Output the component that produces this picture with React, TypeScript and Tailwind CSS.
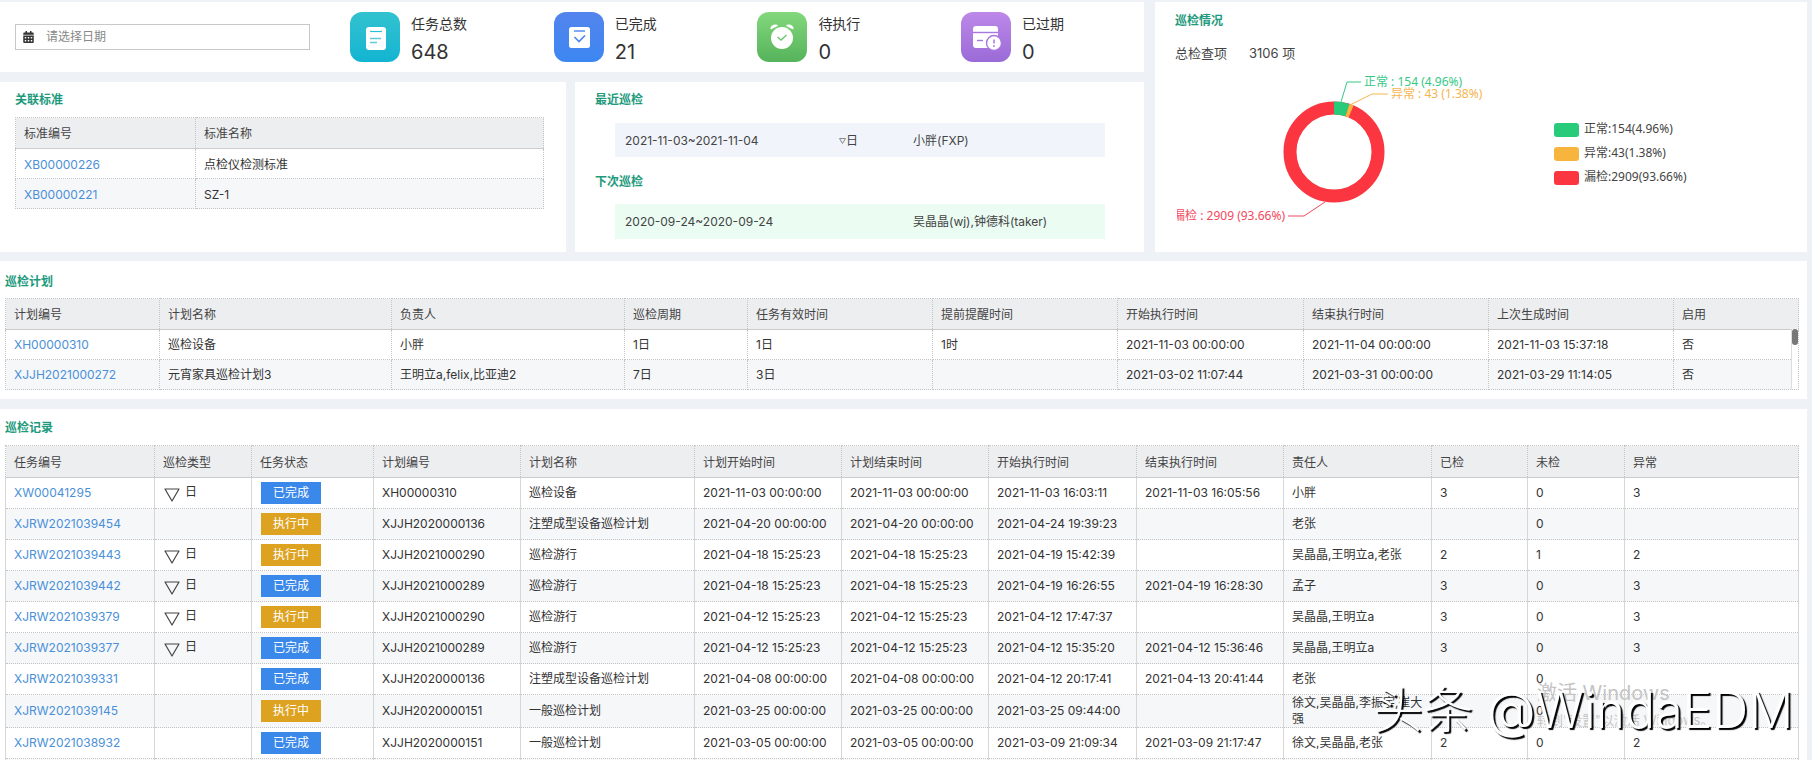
import { FaCalendarAlt } from 'react-icons/fa';

const font = 'font-["Inter","Noto_Sans_CJK_SC",sans-serif]';

type RecordRow = {
  no: string;
  daily: boolean;
  done: boolean;
  plan: string;
  name: string;
  start: string;
  end: string;
  execStart: string;
  execEnd: string;
  owner: string;
  checked: string;
  unchecked: string;
  abnormal: string;
};

const recordRows: RecordRow[] = [
  { no: 'XW00041295', daily: true, done: true, plan: 'XH00000310', name: '巡检设备', start: '2021-11-03 00:00:00', end: '2021-11-03 00:00:00', execStart: '2021-11-03 16:03:11', execEnd: '2021-11-03 16:05:56', owner: '小胖', checked: '3', unchecked: '0', abnormal: '3' },
  { no: 'XJRW2021039454', daily: false, done: false, plan: 'XJJH2020000136', name: '注塑成型设备巡检计划', start: '2021-04-20 00:00:00', end: '2021-04-20 00:00:00', execStart: '2021-04-24 19:39:23', execEnd: '', owner: '老张', checked: '', unchecked: '0', abnormal: '' },
  { no: 'XJRW2021039443', daily: true, done: false, plan: 'XJJH2021000290', name: '巡检游行', start: '2021-04-18 15:25:23', end: '2021-04-18 15:25:23', execStart: '2021-04-19 15:42:39', execEnd: '', owner: '吴晶晶,王明立a,老张', checked: '2', unchecked: '1', abnormal: '2' },
  { no: 'XJRW2021039442', daily: true, done: true, plan: 'XJJH2021000289', name: '巡检游行', start: '2021-04-18 15:25:23', end: '2021-04-18 15:25:23', execStart: '2021-04-19 16:26:55', execEnd: '2021-04-19 16:28:30', owner: '孟子', checked: '3', unchecked: '0', abnormal: '3' },
  { no: 'XJRW2021039379', daily: true, done: false, plan: 'XJJH2021000290', name: '巡检游行', start: '2021-04-12 15:25:23', end: '2021-04-12 15:25:23', execStart: '2021-04-12 17:47:37', execEnd: '', owner: '吴晶晶,王明立a', checked: '3', unchecked: '0', abnormal: '3' },
  { no: 'XJRW2021039377', daily: true, done: true, plan: 'XJJH2021000289', name: '巡检游行', start: '2021-04-12 15:25:23', end: '2021-04-12 15:25:23', execStart: '2021-04-12 15:35:20', execEnd: '2021-04-12 15:36:46', owner: '吴晶晶,王明立a', checked: '3', unchecked: '0', abnormal: '3' },
  { no: 'XJRW2021039331', daily: false, done: true, plan: 'XJJH2020000136', name: '注塑成型设备巡检计划', start: '2021-04-08 00:00:00', end: '2021-04-08 00:00:00', execStart: '2021-04-12 20:17:41', execEnd: '2021-04-13 20:41:44', owner: '老张', checked: '', unchecked: '0', abnormal: '' },
  { no: 'XJRW2021039145', daily: false, done: false, plan: 'XJJH2020000151', name: '一般巡检计划', start: '2021-03-25 00:00:00', end: '2021-03-25 00:00:00', execStart: '2021-03-25 09:44:00', execEnd: '', owner: '徐文,吴晶晶,李振宇,崔大强', checked: '', unchecked: '0', abnormal: '' },
  { no: 'XJRW2021038932', daily: false, done: true, plan: 'XJJH2020000151', name: '一般巡检计划', start: '2021-03-05 00:00:00', end: '2021-03-05 00:00:00', execStart: '2021-03-09 21:09:34', execEnd: '2021-03-09 21:17:47', owner: '徐文,吴晶晶,老张', checked: '2', unchecked: '0', abnormal: '2' },
  { no: '', daily: false, done: false, plan: '', name: '', start: '', end: '', execStart: '', execEnd: '', owner: '', checked: '', unchecked: '', abnormal: '' },
];

const planHead = ['计划编号', '计划名称', '负责人', '巡检周期', '任务有效时间', '提前提醒时间', '开始执行时间', '结束执行时间', '上次生成时间', '启用'];
const planCols = ['w-[154px]', 'w-[232px]', 'w-[233px]', 'w-[123px]', 'w-[185px]', 'w-[185px]', 'w-[186px]', 'w-[185px]', 'w-[185px]', 'w-[125px]'];
const planRows = [
  ['XH00000310', '巡检设备', '小胖', '1日', '1日', '1时', '2021-11-03 00:00:00', '2021-11-04 00:00:00', '2021-11-03 15:37:18', '否'],
  ['XJJH2021000272', '元宵家具巡检计划3', '王明立a,felix,比亚迪2', '7日', '3日', '', '2021-03-02 11:07:44', '2021-03-31 00:00:00', '2021-03-29 11:14:05', '否'],
];

const recordHead = ['任务编号', '巡检类型', '任务状态', '计划编号', '计划名称', '计划开始时间', '计划结束时间', '开始执行时间', '结束执行时间', '责任人', '已检', '未检', '异常'];
const recordCols = ['w-[149px]', 'w-[97px]', 'w-[122px]', 'w-[147px]', 'w-[174px]', 'w-[147px]', 'w-[147px]', 'w-[148px]', 'w-[147px]', 'w-[148px]', 'w-[96px]', 'w-[97px]', 'w-[174px]'];

function Heading({ children }: { children: string }) {
  return <h3 className="text-[12px] leading-[16px] font-bold text-[#1d9a7c]">{children}</h3>;
}

function Head({ labels, height }: { labels: string[]; height: string }) {
  return (
    <thead>
      <tr className={`bg-[#edeef0] ${height}`}>
        {labels.map((label, i) => (
          <th key={i} className="border border-dotted border-[#c4c4c4] border-b-[#cccccc] [border-bottom-style:solid] px-[8px] pt-[2px] text-left text-[12px] font-normal text-[#444]">
            {label}
          </th>
        ))}
      </tr>
    </thead>
  );
}

function Triangle() {
  return (
    <svg width="16" height="14" viewBox="0 0 16 14" className="shrink-0">
      <path d="M1 1 H15 L8 13 Z" fill="none" stroke="#444" strokeWidth="1.2" strokeLinejoin="round" />
    </svg>
  );
}

function StatIcon({ kind }: { kind: 'total' | 'done' | 'waiting' | 'expired' }) {
  if (kind === 'total') {
    return (
      <svg width="50" height="50" viewBox="0 0 50 50">
        <rect x="16" y="15" width="20" height="23" rx="3" fill="#fff" />
        <path d="M20 19.5 H32" stroke="#2cbfd0" strokeWidth="1.2" />
        <path d="M20 26.5 H31 M20 30.5 H27" stroke="#5ccbd8" strokeWidth="1.4" />
      </svg>
    );
  }
  if (kind === 'done') {
    return (
      <svg width="50" height="50" viewBox="0 0 50 50">
        <rect x="15" y="15" width="21" height="21" rx="2.5" fill="#fff" />
        <path d="M20 19 H31" stroke="#4a86ee" strokeWidth="1.4" />
        <path d="M20.5 25 L25 29.5 L31 23.5" fill="none" stroke="#4a86ee" strokeWidth="1.6" />
      </svg>
    );
  }
  if (kind === 'waiting') {
    return (
      <svg width="50" height="50" viewBox="0 0 50 50">
        <circle cx="25" cy="26" r="11" fill="#fff" />
        <path d="M14 16.5 C15 13.5 18 12.5 20 13.5 Z M36 16.5 C35 13.5 32 12.5 30 13.5 Z" fill="#fff" stroke="#fff" strokeWidth="1.4" strokeLinejoin="round" />
        <path d="M20.5 25 L24 28 L29.5 23" fill="none" stroke="#6cc56d" strokeWidth="1.4" />
      </svg>
    );
  }
  return (
    <svg width="50" height="50" viewBox="0 0 50 50">
      <rect x="12" y="14" width="25" height="22" rx="3" fill="#fff" />
      <path d="M12 20.5 H37" stroke="#a877df" strokeWidth="1.4" />
      <path d="M16 28.5 H22" stroke="#a877df" strokeWidth="1.4" />
      <circle cx="33" cy="31" r="7.5" fill="#fff" stroke="#a877df" strokeWidth="1.4" />
      <path d="M33 27.5 V31.5" stroke="#a877df" strokeWidth="1.5" />
      <circle cx="33" cy="34" r="0.9" fill="#a877df" />
    </svg>
  );
}

function Stat({ label, value, kind, bg }: { label: string; value: string; kind: 'total' | 'done' | 'waiting' | 'expired'; bg: string }) {
  return (
    <div className="flex w-[203.7px] shrink-0 items-center">
      <div className={`h-[50px] w-[50px] rounded-[12px] bg-gradient-to-b ${bg}`}>
        <StatIcon kind={kind} />
      </div>
      <div className="ml-[11px] pt-[6px] text-[#333]">
        <div className="text-[14px] leading-[20px]">{label}</div>
        <div className="mt-[4px] text-[20px] leading-[28px]">{value}</div>
      </div>
    </div>
  );
}

function Chart() {
  return (
    <svg viewBox="1155 62 652 190" className='block h-[190px] w-[652px] font-["Noto_Sans","Noto_Sans_CJK_SC",sans-serif] text-[12px]'>
      <defs>
        <clipPath id="chart-clip">
          <rect x="1177" y="62" width="630" height="190" />
        </clipPath>
      </defs>
      <g fill="none" strokeWidth="13" transform="rotate(-90 1334 152)">
        <circle cx="1334" cy="152" r="44" stroke="#fb3640" />
        <circle cx="1334" cy="152" r="44" stroke="#27cb7a" pathLength={100} strokeDasharray="4.96 95.04" />
        <circle cx="1334" cy="152" r="44" stroke="#f7b53e" pathLength={100} strokeDasharray="1.38 98.62" strokeDashoffset="-4.96" />
      </g>
      <path d="M1341 102 L1347 82 H1361" fill="none" stroke="#35c986" />
      <path d="M1350 105 L1372 94 H1388" fill="none" stroke="#f5b54f" />
      <path d="M1325 202 L1304 216 H1288" fill="none" stroke="#f2495c" />
      <text x="1364" y="86" fill="#35c986">正常 : 154 (4.96%)</text>
      <text x="1391" y="98" fill="#f5b54f">异常 : 43 (1.38%)</text>
      <g clipPath="url(#chart-clip)">
        <text x="1285" y="220" textAnchor="end" fill="#f2495c">漏检 : 2909 (93.66%)</text>
      </g>
      <rect x="1554" y="123" width="25" height="14" rx="3" fill="#27cb7a" />
      <rect x="1554" y="147" width="25" height="14" rx="3" fill="#f7b53e" />
      <rect x="1554" y="171" width="25" height="14" rx="3" fill="#fb3640" />
      <g fill="#444">
        <text x="1584" y="133">正常:154(4.96%)</text>
        <text x="1584" y="157">异常:43(1.38%)</text>
        <text x="1584" y="181">漏检:2909(93.66%)</text>
      </g>
    </svg>
  );
}

export default function App() {
  const box = 'border border-dotted border-[#c4c4c4] px-[8px] text-[12px] leading-[16px]';
  const cell = `${box} text-[#333]`;
  const linkCell = `${box} text-[#4a90d9]`;
  const recBox = 'border border-x-[#d6d6d6] border-y-[#c4c4c4] [border-top-style:dotted] [border-bottom-style:dotted] px-[8px] text-[12px] leading-[16px]';
  const recordCell = `${recBox} text-[#333]`;
  const recordLink = `${recBox} text-[#4a90d9]`;

  return (
    <div className={`relative h-[760px] w-[1812px] overflow-hidden bg-[#eef1f6] pt-[2px] ${font}`}>
      <div className="flex">
        <div className="flex w-[1144px] flex-col gap-[10px]">
          <div className="flex h-[70px] items-center bg-white pl-[15px]">
            <div className="flex h-[26px] w-[295px] shrink-0 items-center border border-[#c8c8c8] pl-[7px] text-[12px] text-[#888]">
              <FaCalendarAlt className="h-[12px] w-[11px] text-[#333]" />
              <span className="ml-[12px]">请选择日期</span>
            </div>
            <div className="ml-[40px] flex">
              <Stat label="任务总数" value="648" kind="total" bg="from-[#31c2cf] to-[#11b4d2]" />
              <Stat label="已完成" value="21" kind="done" bg="from-[#5284ec] to-[#3c87f2]" />
              <Stat label="待执行" value="0" kind="waiting" bg="from-[#83d87c] to-[#55b35b]" />
              <Stat label="已过期" value="0" kind="expired" bg="from-[#bd88e8] to-[#9a6ad7]" />
            </div>
          </div>

          <div className="flex h-[170px] gap-[9px]">
            <div className="w-[566px] bg-white px-[15px] pt-[10px]">
              <Heading>关联标准</Heading>
              <table className="mt-[9px] w-[529px] table-fixed border-collapse">
                <colgroup>
                  <col className="w-[180px]" />
                  <col />
                </colgroup>
                <Head labels={['标准编号', '标准名称']} height="h-[31px]" />
                <tbody>
                  <tr className="h-[30px]">
                    <td className={`${linkCell} pt-[2px]`}>XB00000226</td>
                    <td className={`${cell} pt-[2px]`}>点检仪检测标准</td>
                  </tr>
                  <tr className="h-[30px] bg-[#f6f7f9]">
                    <td className={`${linkCell} pt-[2px]`}>XB00000221</td>
                    <td className={`${cell} pt-[2px]`}>SZ-1</td>
                  </tr>
                </tbody>
              </table>
            </div>

            <div className="w-[569px] bg-white pt-[10px] pl-[20px] text-[12px] text-[#444]">
              <Heading>最近巡检</Heading>
              <div className="mt-[15px] ml-[20px] flex h-[34px] w-[490px] items-center bg-[#f1f5fb] pt-[1px] pl-[10px]">
                <span className="w-[214px]">2021-11-03~2021-11-04</span>
                <span className="flex w-[74px] items-center">
                  <svg width="7" height="6" viewBox="0 0 7 6">
                    <path d="M0.5 0.5 H6.5 L3.5 5.5 Z" fill="none" stroke="#888" />
                  </svg>
                  日
                </span>
                <span>小胖(FXP)</span>
              </div>
              <div className="mt-[17px]">
                <Heading>下次巡检</Heading>
              </div>
              <div className="mt-[14px] ml-[20px] flex h-[35px] w-[490px] items-center bg-[#ebfcf3] pl-[10px]">
                <span className="w-[288px]">2020-09-24~2020-09-24</span>
                <span>吴晶晶(wj),钟德科(taker)</span>
              </div>
            </div>
          </div>
        </div>

        <div className="ml-[11px] h-[250px] w-[652px] bg-white">
          <div className="pt-[11px] pl-[20px]">
            <Heading>巡检情况</Heading>
            <div className="mt-[15px] flex text-[13px] leading-[18px] text-[#444]">
              <span className="w-[74px]">总检查项</span>
              <span>3106 项</span>
            </div>
          </div>
          <Chart />
        </div>
      </div>

      <div className="mt-[9px] h-[138px] w-[1807px] bg-white pt-[13px] pl-[5px]">
        <Heading>巡检计划</Heading>
        <div className="relative mt-[8px] w-[1793px]">
          <table className="w-[1793px] table-fixed border-collapse">
            <colgroup>
              {planCols.map((width, i) => (
                <col key={i} className={width} />
              ))}
            </colgroup>
            <Head labels={planHead} height="h-[31px]" />
            <tbody>
              {planRows.map((row, r) => (
                <tr key={r} className={r % 2 ? 'h-[30px] bg-[#f6f7f9]' : 'h-[30px]'}>
                  {row.map((value, c) => (
                    <td key={c} className={c === 0 ? linkCell : cell}>
                      {value}
                    </td>
                  ))}
                </tr>
              ))}
            </tbody>
          </table>
          <div className="absolute top-[31px] right-0 h-[60px] w-[7px] border-l border-[#dddddd] bg-white">
            <div className="h-[16px] rounded-[3px] bg-[#777]" />
          </div>
        </div>
      </div>

      <div className="mt-[10px] w-[1807px] bg-white pt-[11px] pl-[5px]">
        <Heading>巡检记录</Heading>
        <table className="mt-[9px] w-[1793px] table-fixed border-collapse">
          <colgroup>
            {recordCols.map((width, i) => (
              <col key={i} className={width} />
            ))}
          </colgroup>
          <Head labels={recordHead} height="h-[32px]" />
          <tbody>
            {recordRows.map((row, r) => (
              <tr key={r} className={r % 2 ? 'h-[31px] bg-[#f6f7f9]' : 'h-[31px]'}>
                <td className={recordLink}>{row.no}</td>
                <td className={recordCell}>
                  {row.daily && (
                    <span className="ml-[1px] flex items-start">
                      <span className="mt-[4px]">
                        <Triangle />
                      </span>
                      <span className="ml-[5px]">日</span>
                    </span>
                  )}
                </td>
                <td className={recordCell}>
                  {row.no && (
                    <div className={`ml-[1px] flex h-[22px] w-[60px] items-center justify-center text-white ${row.done ? 'bg-[#3a88ea]' : 'bg-[#dda21f]'}`}>
                      {row.done ? '已完成' : '执行中'}
                    </div>
                  )}
                </td>
                <td className={recordCell}>{row.plan}</td>
                <td className={recordCell}>{row.name}</td>
                <td className={recordCell}>{row.start}</td>
                <td className={recordCell}>{row.end}</td>
                <td className={recordCell}>{row.execStart}</td>
                <td className={recordCell}>{row.execEnd}</td>
                <td className={recordCell}>{row.owner}</td>
                <td className={recordCell}>{row.checked}</td>
                <td className={recordCell}>{row.unchecked}</td>
                <td className={recordCell}>{row.abnormal}</td>
              </tr>
            ))}
          </tbody>
        </table>
      </div>

      <div className="absolute top-[680px] left-[1537px] text-[#c4c4c4]">
        <div className="text-[20px] leading-[26px]">激活 Windows</div>
        <div className="mt-[5px] text-[13px] leading-[18px]">转到"设置"以激活 Windows。</div>
      </div>
      <div className="absolute top-[680px] left-[1373px] text-[50px] leading-[60px] font-light whitespace-nowrap text-white [text-shadow:2px_2px_1px_#000]">
        头条 @WindaEDM
      </div>
    </div>
  );
}
